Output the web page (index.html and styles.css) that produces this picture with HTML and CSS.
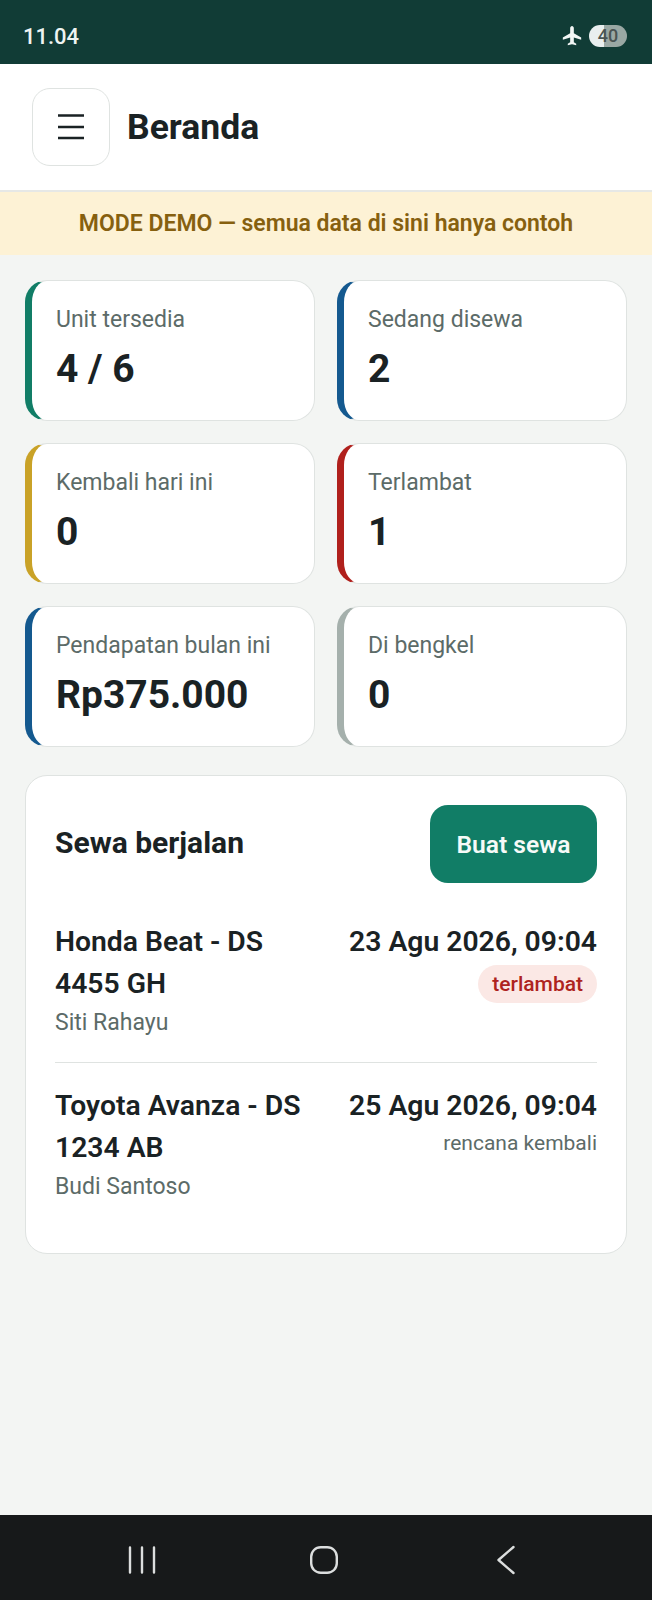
FILE: index.html
```html
<!doctype html>
<html lang="id">
  <head>
    <meta charset="utf-8">
    <title>Beranda</title>
    <link rel="stylesheet" href="styles.css">
  </head>
  <body>
    <div class="status-bar">
      <span class="clock">11.04</span>
      <div class="status-icons">
        <svg class="plane" viewBox="0 0 24 24" width="22" height="22"><path fill="#f2f6f5" d="M22 16v-2.400l-8-4.600V3.500C14 2.300 13 1.200 12 1.200S10 2.300 10 3.500V9l-8 4.600V16l8-2.300v5l-2.600 1.800V22L12 21l4.600 1v-1.500L14 18.700v-5z"/></svg>
        <div class="battery"><span>40</span></div>
      </div>
    </div>

    <header class="topbar">
      <button class="menu-btn" aria-label="Menu">
        <svg viewBox="0 0 28 28" width="28" height="28"><path stroke="#1a2224" stroke-width="2.500" d="M1 2.500h26M1 14h26M1 25h26"/></svg>
      </button>
      <h1>Beranda</h1>
    </header>

    <div class="demo-banner">MODE DEMO — semua data di sini hanya contoh</div>

    <main class="content">
      <section class="stats">
        <div class="stat green"><div class="stat-label">Unit tersedia</div><div class="stat-value">4 / 6</div></div>
        <div class="stat blue"><div class="stat-label">Sedang disewa</div><div class="stat-value">2</div></div>
        <div class="stat yellow"><div class="stat-label">Kembali hari ini</div><div class="stat-value">0</div></div>
        <div class="stat red"><div class="stat-label">Terlambat</div><div class="stat-value">1</div></div>
        <div class="stat blue"><div class="stat-label">Pendapatan bulan ini</div><div class="stat-value">Rp375.000</div></div>
        <div class="stat grey"><div class="stat-label">Di bengkel</div><div class="stat-value">0</div></div>
      </section>

      <section class="panel">
        <div class="panel-head">
          <h2>Sewa berjalan</h2>
          <button class="primary-btn">Buat sewa</button>
        </div>

        <div class="rent-row">
          <div class="rent-main">
            <div class="rent-title">Honda Beat - DS 4455 GH</div>
            <div class="rent-name">Siti Rahayu</div>
          </div>
          <div class="rent-side">
            <div class="rent-date">23 Agu 2026, 09:04</div>
            <span class="pill-late">terlambat</span>
          </div>
        </div>

        <div class="rent-row">
          <div class="rent-main">
            <div class="rent-title">Toyota Avanza - DS 1234 AB</div>
            <div class="rent-name">Budi Santoso</div>
          </div>
          <div class="rent-side">
            <div class="rent-date">25 Agu 2026, 09:04</div>
            <span class="rent-note">rencana kembali</span>
          </div>
        </div>
      </section>
    </main>

    <nav class="nav-bar">
      <svg viewBox="0 0 30 30" width="30" height="30"><path stroke="#dcdede" stroke-width="2.400" stroke-linecap="round" d="M3 2.500v25M15 2.500v25M27 2.500v25"/></svg>
      <svg viewBox="0 0 30 30" width="30" height="30"><rect x="2.200" y="2.200" width="25.600" height="25.600" rx="9.500" fill="none" stroke="#dcdede" stroke-width="2.400"/></svg>
      <svg viewBox="0 0 30 30" width="30" height="30"><path fill="none" stroke="#dcdede" stroke-width="2.400" stroke-linecap="round" stroke-linejoin="round" d="M22.500 2 7.500 15l15 13"/></svg>
    </nav>
  </body>
</html>
```

FILE: styles.css
```css
* {
    box-sizing: border-box;
}

body {
    margin: 0;
    height: 1600px;
    display: flex;
    flex-direction: column;
    font-family: Roboto, "Noto Sans", sans-serif;
    background: #f3f5f3;
    color: #1a2224;
}

.status-bar {
    height: 64px;
    padding: 8px 25px 0 23px;
    display: flex;
    align-items: center;
    justify-content: space-between;
    background: #113c36;
    color: #eef4f2;
}

.clock {
    font-size: 22px;
    font-weight: 500;
}

.status-icons {
    display: flex;
    align-items: center;
    gap: 6px;
}

.battery {
    width: 38px;
    height: 22px;
    border-radius: 11px;
    background: linear-gradient(90deg, #e9efef 0 40%, #9aa8a4 40% 100%);
    color: #4a5453;
    font-size: 18px;
    font-weight: 500;
    text-align: center;
    line-height: 22px;
}

.topbar {
    height: 128px;
    padding: 0 32px;
    display: flex;
    align-items: center;
    gap: 17px;
    background: #fff;
    border-bottom: 2px solid #e6e8e6;
}

.menu-btn {
    width: 78px;
    height: 78px;
    padding: 0;
    display: flex;
    align-items: center;
    justify-content: center;
    background: #fff;
    border: 1px solid #dfe3e1;
    border-radius: 18px;
}

h1 {
    margin: 0;
    font-size: 35.500px;
    font-weight: 700;
}

.demo-banner {
    height: 63px;
    display: flex;
    align-items: center;
    justify-content: center;
    background: #fdf2d5;
    color: #86600f;
    font-size: 23px;
    font-weight: 600;
}

.content {
    flex: 1;
    padding: 25px;
}

.stats {
    display: grid;
    grid-template-columns: 1fr 1fr;
    gap: 22px;
}

.stat {
    height: 141px;
    padding: 26px 24px;
    background: #fff;
    border: 1px solid #dfe3e1;
    border-left-width: 7px;
    border-radius: 22px;
}

.stat.green { border-left-color: #117d66; }
.stat.blue { border-left-color: #14598f; }
.stat.yellow { border-left-color: #c9a227; }
.stat.red { border-left-color: #b0201c; }
.stat.grey { border-left-color: #a5b0ac; }

.stat-label {
    font-size: 23px;
    line-height: 26px;
    color: #5c6b68;
}

.stat-value {
    margin-top: 13px;
    font-size: 39px;
    line-height: 46px;
    font-weight: 700;
}

.panel {
    margin-top: 28px;
    height: 479px;
    padding: 29px;
    background: #fff;
    border: 1px solid #dfe3e1;
    border-radius: 22px;
}

.panel-head {
    display: flex;
    align-items: center;
    justify-content: space-between;
    margin-bottom: 16px;
}

h2 {
    margin: 0;
    padding-bottom: 4px;
    font-size: 30px;
    font-weight: 700;
}

.primary-btn {
    width: 167px;
    height: 78px;
    background: #117d66;
    color: #f6faf8;
    border: 0;
    border-radius: 18px;
    font-family: inherit;
    font-size: 24.600px;
    font-weight: 600;
}

.rent-row {
    display: flex;
    justify-content: space-between;
    gap: 20px;
    padding: 22px 0 23px;
    border-bottom: 1px solid #dfe3e1;
}

.rent-row:last-child {
    border-bottom: 0;
}

.rent-main {
    max-width: 260px;
}

.rent-title {
    font-size: 28.300px;
    line-height: 42px;
    font-weight: 600;
}

.rent-name {
    margin-top: 2px;
    font-size: 23px;
    line-height: 32px;
    color: #5c6b68;
}

.rent-side {
    text-align: right;
    flex-shrink: 0;
}

.rent-date {
    font-size: 28.300px;
    line-height: 42px;
    font-weight: 600;
}

.pill-late {
    display: inline-block;
    margin-top: 2px;
    padding: 0 14px;
    height: 38px;
    line-height: 38px;
    border-radius: 19px;
    background: #fbe8e5;
    color: #ae2320;
    font-size: 21px;
    font-weight: 500;
}

.rent-note {
    display: block;
    margin-top: 4px;
    font-size: 21px;
    color: #5c6b68;
}

.nav-bar {
    height: 85px;
    padding: 4px 4px 0 0;
    display: flex;
    align-items: center;
    justify-content: center;
    gap: 152px;
    background: #17191a;
}
```
